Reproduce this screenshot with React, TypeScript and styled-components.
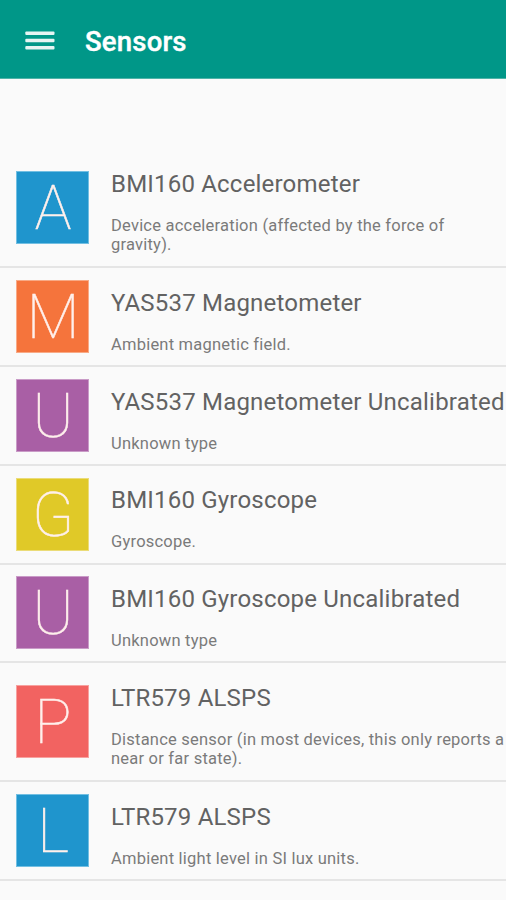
import React from "react";
import styled, { createGlobalStyle } from "styled-components";

const GlobalStyle = createGlobalStyle`
  * { box-sizing: border-box; }
  html, body { margin: 0; padding: 0; background: #fafafa; overflow: hidden; }
  body { font-family: Roboto, "Liberation Sans", sans-serif; }
`;

const Screen = styled.div`
  width: 506px;
  height: 900px;
  overflow: hidden;
  background: #fafafa;
`;

const AppBar = styled.header`
  display: flex;
  align-items: center;
  height: 79px;
  padding: 3px 0 0 25px;
  gap: 30px;
  background: #009788;
  border-bottom: 1px solid #4fb3a8;
`;

const MenuIcon = styled.svg`
  display: block;
  width: 30px;
  height: 20px;
`;

const AppTitle = styled.h1`
  margin: 0;
  padding-top: 2px;
  color: #fff;
  font-size: 27.5px;
  line-height: 32px;
  font-weight: 500;
  letter-spacing: 0.2px;
  -webkit-text-stroke: 0.4px #fff;
`;

const SensorList = styled.ul`
  margin: 0;
  padding: 70.4px 0 0;
  list-style: none;
`;

const SensorRow = styled.li<{ $tall?: boolean }>`
  display: flex;
  align-items: center;
  height: ${(p) => (p.$tall ? 118.8 : 98.8)}px;
  padding-left: 16px;
  gap: 22px;
  border-bottom: 2px solid #e5e5e5;
`;

const Tile = styled.div<{ $color: string; $edge: string }>`
  flex: none;
  width: 73px;
  height: 73px;
  background: ${(p) => p.$color};
  border: 1px solid ${(p) => p.$edge};
  color: #fff0ec;
  font-size: 61.5px;
  line-height: 72px;
  font-weight: 100;
  text-align: center;
  text-indent: 1px;
  -webkit-text-stroke: 0.5px #fff0ec;
`;

const Details = styled.div`
  flex: none;
  align-self: flex-start;
  padding-top: 18.6px;
`;

const Name = styled.h2`
  margin: 0;
  color: #626262;
  font-size: 24px;
  line-height: 32px;
  font-weight: 400;
  letter-spacing: 0.2px;
  white-space: nowrap;
`;

const Description = styled.p`
  margin: 16px 0 0;
  color: #7a7a7a;
  font-size: 16.5px;
  line-height: 19.4px;
  letter-spacing: 0.22px;
  white-space: pre;
`;

type Sensor = {
  letter: string;
  color: string;
  edge: string;
  name: string;
  description: string;
  tall?: boolean;
};

const sensors: Sensor[] = [
  { letter: "A", color: "#1f95cd", edge: "#72bfe2", name: "BMI160 Accelerometer", description: "Device acceleration (affected by the force of\ngravity).", tall: true },
  { letter: "M", color: "#f5743c", edge: "#f8aa86", name: "YAS537 Magnetometer", description: "Ambient magnetic field." },
  { letter: "U", color: "#a95fa5", edge: "#c99bc7", name: "YAS537 Magnetometer Uncalibrated", description: "Unknown type" },
  { letter: "G", color: "#e0c928", edge: "#ebdc78", name: "BMI160 Gyroscope", description: "Gyroscope." },
  { letter: "U", color: "#a95fa5", edge: "#c99bc7", name: "BMI160 Gyroscope Uncalibrated", description: "Unknown type" },
  { letter: "P", color: "#f26361", edge: "#f7a19f", name: "LTR579 ALSPS", description: "Distance sensor (in most devices, this only reports a\nnear or far state).", tall: true },
  { letter: "L", color: "#1f95cd", edge: "#72bfe2", name: "LTR579 ALSPS", description: "Ambient light level in SI lux units." },
];

export default function App() {
  return (
    <Screen>
      <GlobalStyle />
      <AppBar>
        <MenuIcon viewBox="0 0 30 20" aria-label="Menu">
          <g fill="#e6f5f3">
            <rect x="0.3" y="0.5" width="29.2" height="3.6" rx="1" />
            <rect x="0.3" y="7.7" width="29.2" height="3.6" rx="1" />
            <rect x="0.3" y="14.9" width="29.2" height="3.6" rx="1" />
          </g>
        </MenuIcon>
        <AppTitle>Sensors</AppTitle>
      </AppBar>
      <SensorList>
        {sensors.map((s, i) => (
          <SensorRow key={i} $tall={s.tall}>
            <Tile $color={s.color} $edge={s.edge}>{s.letter}</Tile>
            <Details>
              <Name>{s.name}</Name>
              <Description>{s.description}</Description>
            </Details>
          </SensorRow>
        ))}
      </SensorList>
    </Screen>
  );
}
